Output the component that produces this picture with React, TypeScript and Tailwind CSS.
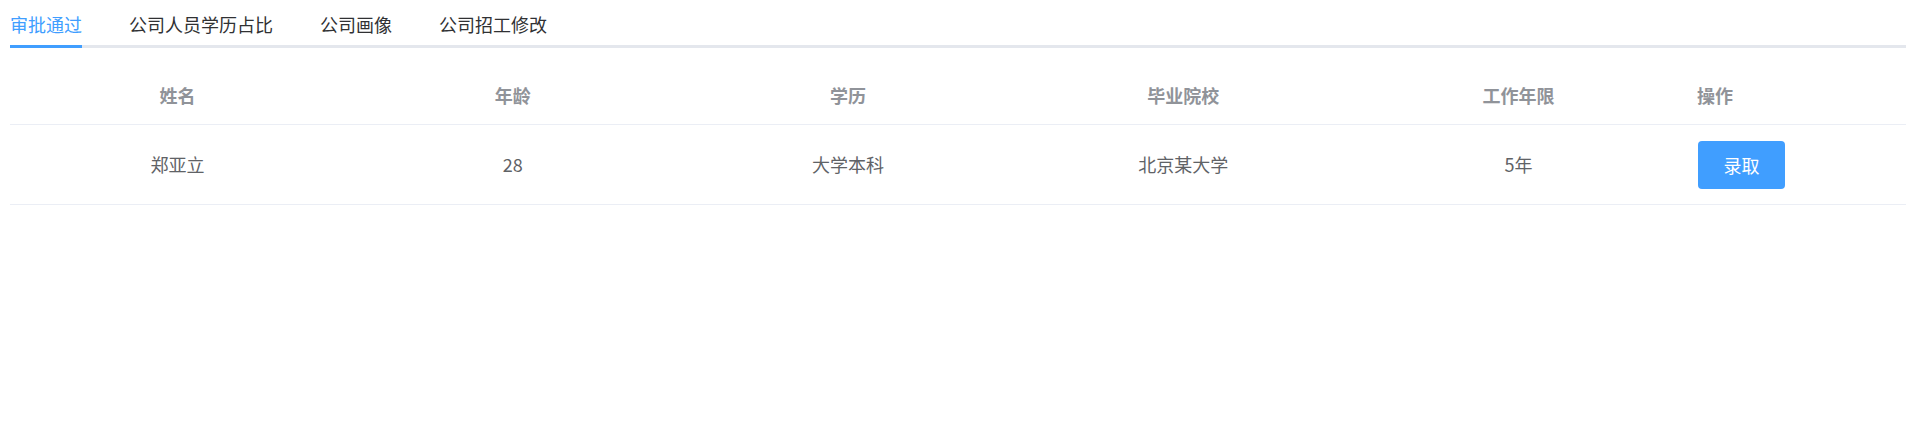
import React, { useState } from 'react';

const tabs = ['审批通过', '公司人员学历占比', '公司画像', '公司招工修改'];

const columns = ['姓名', '年龄', '学历', '毕业院校', '工作年限'];

const rows = [
  { name: '郑亚立', age: '28', edu: '大学本科', school: '北京某大学', years: '5年' },
];

export default function App() {
  const [active, setActive] = useState(0);

  return (
    <div
      className="min-h-screen bg-white pl-[10px]"
      style={{ fontFamily: '"Microsoft YaHei", "Noto Sans CJK SC", "Noto Sans", sans-serif' }}
    >
      {/* Tabs */}
      <div className="flex gap-[47px] shadow-[inset_0_-3px_0_#e4e7ed]">
        {tabs.map((t, i) => (
          <button
            key={t}
            onClick={() => setActive(i)}
            className={`h-[48px] flex items-center pt-[3px] border-b-[3px] text-[18px] leading-none ${
              active === i ? 'border-[#409eff] text-[#409eff]' : 'border-transparent text-[#303133]'
            }`}
          >
            {t}
          </button>
        ))}
      </div>

      {/* Table */}
      <div className="mt-[18px] text-[18px]">
        <div className="grid grid-cols-[repeat(5,1fr)_220px] h-[59px] border-b border-[#ebeef5] font-bold text-[#909399]">
          {columns.map((c) => (
            <div key={c} className="flex items-center justify-center">
              {c}
            </div>
          ))}
          <div className="flex items-center pl-[11px]">操作</div>
        </div>
        {rows.map((r) => (
          <div
            key={r.name}
            className="grid grid-cols-[repeat(5,1fr)_220px] h-[80px] border-b border-[#ebeef5] text-[#606266]"
          >
            <div className="flex items-center justify-center">{r.name}</div>
            <div className="flex items-center justify-center">{r.age}</div>
            <div className="flex items-center justify-center">{r.edu}</div>
            <div className="flex items-center justify-center">{r.school}</div>
            <div className="flex items-center justify-center">{r.years}</div>
            <div className="flex items-center pl-[12px]">
              <button className="w-[87px] h-[48px] rounded-[4px] bg-[#409eff] text-white text-[18px] leading-none">
                录取
              </button>
            </div>
          </div>
        ))}
      </div>
    </div>
  );
}
